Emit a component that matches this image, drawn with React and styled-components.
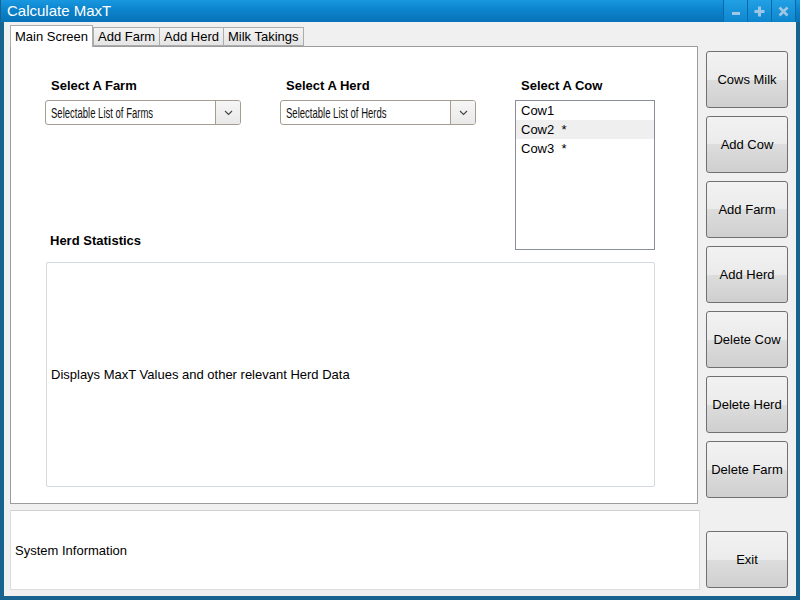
import styled, { createGlobalStyle } from "styled-components"

const GlobalStyle = createGlobalStyle`
  html, body {
    margin: 0;
    padding: 0;
    background: #ffffff;
  }
  * {
    box-sizing: border-box;
  }
`

const sideButtons = ["Cows Milk", "Add Cow", "Add Farm", "Add Herd", "Delete Cow", "Delete Herd", "Delete Farm"]
const tabs = ["Main Screen", "Add Farm", "Add Herd", "Milk Takings"]
const cows = [
    { name: "Cow1", flag: "" },
    { name: "Cow2", flag: "  *" },
    { name: "Cow3", flag: "  *" },
]

const Chevron = () => (
    <svg width="9" height="6" viewBox="0 0 9 6">
        <path d="M1 1 L4.5 4.5 L8 1" stroke="#444" strokeWidth="1.1" fill="none" />
    </svg>
)

const App = () => {
    return (
        <Window>
            <GlobalStyle />
            <TitleBar>
                <Title>Calculate MaxT</Title>
                <TitleButtons>
                    <TitleButton>
                        <svg width="10" height="10" viewBox="0 0 10 10">
                            <rect x="1" y="6" width="8" height="3" fill="#9fc6e4" />
                        </svg>
                    </TitleButton>
                    <TitleButton>
                        <svg width="11" height="11" viewBox="0 0 11 11">
                            <rect x="4" y="0.5" width="3" height="10" fill="#9fc6e4" />
                            <rect x="0.5" y="4" width="10" height="3" fill="#9fc6e4" />
                        </svg>
                    </TitleButton>
                    <TitleButton>
                        <svg width="11" height="11" viewBox="0 0 11 11">
                            <path d="M1.5 1.5 L9.5 9.5 M9.5 1.5 L1.5 9.5" stroke="#9fc6e4" strokeWidth="2.6" />
                        </svg>
                    </TitleButton>
                </TitleButtons>
            </TitleBar>
            <Client>
                <MainColumn>
                    <TabStrip>
                        {tabs.map((t, i) => (
                            <Tab key={t} $active={i === 0}>{t}</Tab>
                        ))}
                    </TabStrip>
                    <TabPanel>
                        <FormGrid>
                            <Field>
                                <FieldLabel>Select A Farm</FieldLabel>
                                <Select>
                                    <SelectText><Narrow>Selectable List of Farms</Narrow></SelectText>
                                    <SelectArrow><Chevron /></SelectArrow>
                                </Select>
                            </Field>
                            <Field>
                                <FieldLabel>Select A Herd</FieldLabel>
                                <Select>
                                    <SelectText><Narrow>Selectable List of Herds</Narrow></SelectText>
                                    <SelectArrow><Chevron /></SelectArrow>
                                </Select>
                            </Field>
                            <CowField>
                                <FieldLabel>Select A Cow</FieldLabel>
                                <ListBox>
                                    {cows.map((c, i) => (
                                        <ListItem key={c.name} $hover={i === 1}>{c.name + c.flag}</ListItem>
                                    ))}
                                </ListBox>
                            </CowField>
                            <StatsLabel>Herd Statistics</StatsLabel>
                            <StatsBox>Displays MaxT Values and other relevant Herd Data</StatsBox>
                        </FormGrid>
                    </TabPanel>
                    <InfoBox>System Information</InfoBox>
                </MainColumn>
                <SideColumn>
                    {sideButtons.map((b) => (
                        <SideButton key={b}>{b}</SideButton>
                    ))}
                    <ExitButton>Exit</ExitButton>
                </SideColumn>
            </Client>
        </Window>
    )
}

const Window = styled.div`
    width: 800px;
    height: 600px;
    display: flex;
    flex-direction: column;
    background: #17628f;
    padding: 0 4px 4px 4px;
    font-family: "Liberation Sans", Arial, sans-serif;
    font-size: 13px;
    color: #000;
    overflow: hidden;
`
const TitleBar = styled.div`
    height: 22px;
    margin: 0 -4px;
    padding: 0 4px 0 6px;
    display: flex;
    align-items: center;
    justify-content: space-between;
    background: linear-gradient(to bottom, #1898e0 0%, #0b83cc 45%, #0873b8 100%);
    border-left: 1px solid #17628f;
`
const Title = styled.span`
    color: #ffffff;
    font-size: 15px;
    line-height: 22px;
`
const TitleButtons = styled.div`
    display: flex;
    align-self: stretch;
    gap: 1px;
    background: #0a6aa8;
    padding: 0 1px;
`
const TitleButton = styled.div`
    width: 23px;
    display: flex;
    align-items: center;
    justify-content: center;
    background: linear-gradient(to bottom, #22a0e4, #0d86ce);
`
const Client = styled.div`
    flex: 1;
    display: flex;
    gap: 6px;
    background: #f0f0f0;
    padding: 3px 8px 6px 6px;
`
const MainColumn = styled.div`
    width: 690px;
    display: flex;
    flex-direction: column;
`
const TabStrip = styled.div`
    height: 21px;
    display: flex;
    align-items: flex-end;
    position: relative;
    z-index: 1;
`
const Tab = styled.div`
    height: ${(p) => (p.$active ? "22px" : "19px")};
    margin-bottom: ${(p) => (p.$active ? "-1px" : "0")};
    margin-right: ${(p) => (p.$active ? "0" : "-1px")};
    padding: 0 4px;
    display: flex;
    align-items: center;
    font-size: 13px;
    background: ${(p) => (p.$active ? "#ffffff" : "linear-gradient(to bottom, #f3f3f3, #e5e5e5)")};
    border: 1px solid #acacac;
    border-bottom: ${(p) => (p.$active ? "none" : "1px solid #acacac")};
    &:first-child {
        width: 83px;
    }
`
const TabPanel = styled.div`
    width: 688px;
    height: 458px;
    background: #ffffff;
    border: 1px solid #9c9c9c;
    padding: 31px 0 0 34px;
`
const FormGrid = styled.div`
    display: grid;
    grid-template-columns: 196px 196px 140px;
    column-gap: 39px;
    grid-template-rows: auto auto auto;
`
const Field = styled.div`
    display: flex;
    flex-direction: column;
`
const CowField = styled(Field)`
    grid-row: 1 / 3;
    grid-column: 3;
`
const FieldLabel = styled.div`
    font-weight: bold;
    font-size: 13px;
    line-height: 15px;
    margin: 0 0 7px 6px;
`
const Select = styled.div`
    height: 25px;
    display: flex;
    border: 1px solid #a59d90;
    border-radius: 3px;
    background: #ffffff;
    overflow: hidden;
`
const SelectText = styled.div`
    flex: 1;
    display: flex;
    align-items: center;
    padding-left: 5px;
    overflow: hidden;
`
const Narrow = styled.span`
    display: inline-block;
    font-size: 14px;
    color: #111;
    white-space: nowrap;
    transform: scaleX(0.68);
    transform-origin: left center;
`
const SelectArrow = styled.div`
    width: 25px;
    display: flex;
    align-items: center;
    justify-content: center;
    border-left: 1px solid #a59d90;
    background: linear-gradient(to bottom, #f6f6f6, #e9e9e9);
`
const ListBox = styled.div`
    width: 140px;
    height: 150px;
    border: 1px solid #8a8e96;
    background: #ffffff;
`
const ListItem = styled.div`
    height: 19px;
    line-height: 19px;
    padding-left: 5px;
    font-size: 13px;
    white-space: pre;
    background: ${(p) => (p.$hover ? "#efefef" : "transparent")};
`
const StatsLabel = styled.div`
    grid-row: 2;
    grid-column: 1 / 3;
    font-weight: bold;
    font-size: 13px;
    line-height: 15px;
    margin: 108px 0 14px 5px;
`
const StatsBox = styled.div`
    grid-row: 3;
    grid-column: 1 / 4;
    margin-left: 1px;
    height: 225px;
    display: flex;
    align-items: center;
    padding-left: 4px;
    border: 1px solid #d3d9df;
    border-radius: 2px;
    font-size: 13px;
`
const InfoBox = styled.div`
    margin-top: 6px;
    height: 80px;
    display: flex;
    align-items: center;
    padding-left: 4px;
    background: #ffffff;
    border: 1px solid #dcdcdc;
    border-top-color: #d0d0d0;
    font-size: 13px;
`
const SideColumn = styled.div`
    width: 82px;
    display: flex;
    flex-direction: column;
    gap: 8px;
    padding: 26px 0 2px 0;
`
const SideButton = styled.button`
    height: 57px;
    width: 82px;
    flex-shrink: 0;
    border: 1px solid #707070;
    border-radius: 3px;
    background: linear-gradient(to bottom, #f2f2f2 0%, #ebebeb 50%, #dddddd 50%, #cfcfcf 100%);
    font-family: "Liberation Sans", Arial, sans-serif;
    font-size: 13px;
    color: #000;
    padding: 0;
    cursor: default;
`
const ExitButton = styled(SideButton)`
    margin-top: auto;
`

export default App
